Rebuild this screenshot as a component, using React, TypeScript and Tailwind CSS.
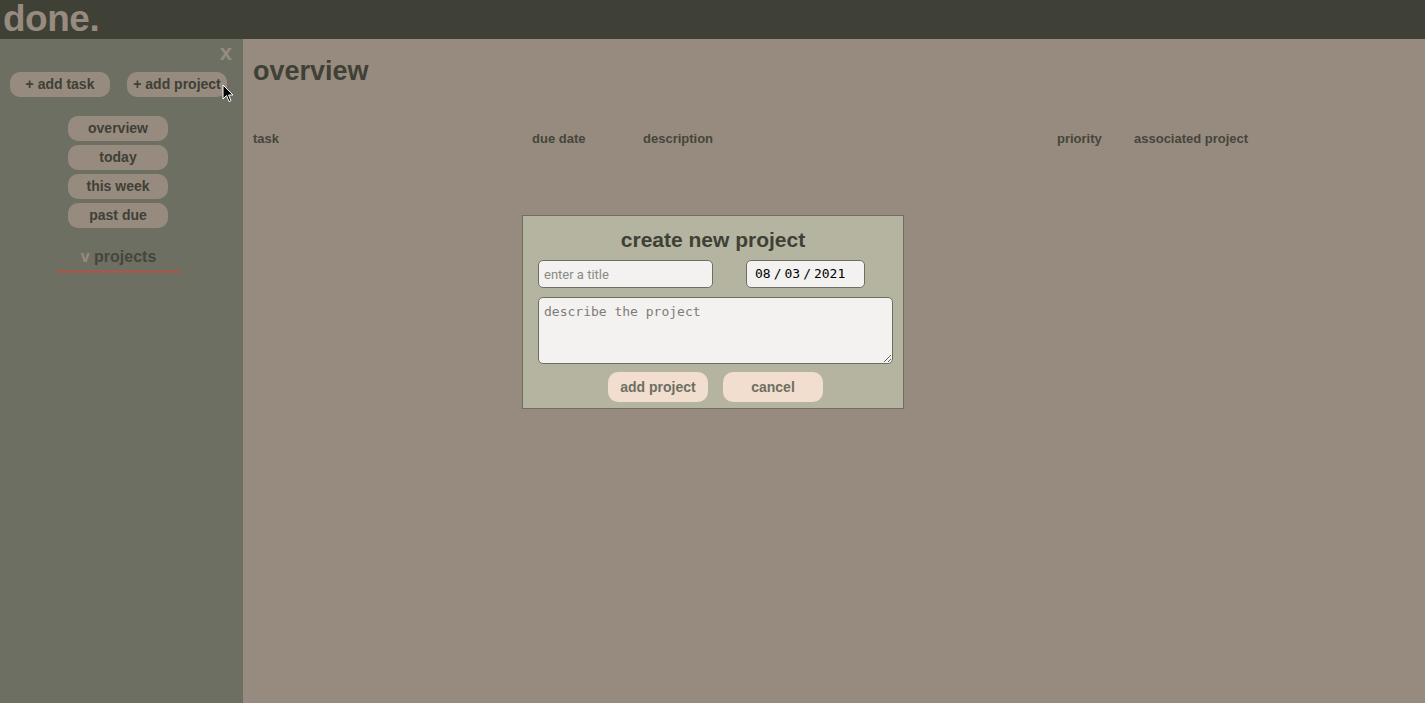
import React from 'react';

const navItems = ['overview', 'today', 'this week', 'past due'];

function Sidebar() {
  return (
    <aside className="w-[243px] shrink-0 bg-[#6e6f63] flex flex-col">
      <div className="flex justify-end pr-[11px] pt-[3px] h-[30px]">
        <span className="text-[22px] font-bold leading-none text-[#978b7f]">x</span>
      </div>
      <div className="flex gap-[17px] pl-[10px] mt-[3px]">
        <button className="w-[100px] h-[25px] rounded-[10px] bg-[#978b7f] text-[14px] font-bold text-[#3f4036]">
          + add task
        </button>
        <button className="w-[100px] h-[25px] rounded-[10px] bg-[#978b7f] text-[14px] font-bold text-[#3f4036]">
          + add project
        </button>
      </div>
      <nav className="flex flex-col items-center gap-[4px] mt-[19px] pr-[7px]">
        {navItems.map((item) => (
          <button
            key={item}
            className="w-[100px] h-[25px] rounded-[10px] bg-[#978b7f] text-[14px] font-bold text-[#3f4036]"
          >
            {item}
          </button>
        ))}
      </nav>
      <div className="flex flex-col items-center mt-[19px] pr-[6px]">
        <div className="text-[16px] font-bold leading-[20px]">
          <span className="text-[#978b7f]">v</span>{' '}
          <span className="text-[#45463b]">projects</span>
        </div>
        <div className="w-[125px] h-[3px] bg-[#9b5d50] mt-[3px]" />
      </div>
    </aside>
  );
}

function Modal() {
  return (
    <div className="absolute left-[279px] top-[176px] w-[382px] h-[194px] bg-[#b5b4a0] border border-[#6e6f63] flex flex-col pl-[15px]">
      <h2 className="self-center -ml-[15px] text-[21px] font-bold text-[#3f4036] mt-[12px] leading-[24px]">
        create new project
      </h2>
      <div className="flex gap-[33px] mt-[8px]">
        <input
          className="w-[175px] h-[28px] rounded-[5px] border border-[#6e6f63] bg-[#f3f2f0] px-[5px] text-[13px] outline-none placeholder:text-[#8a8a85] [font-family:Roboto,sans-serif]"
          placeholder="enter a title"
        />
        <div className="w-[119px] h-[28px] rounded-[5px] border border-[#6e6f63] bg-[#f3f2f0] flex items-center pl-[8px] text-[13px] text-black whitespace-nowrap [font-family:'DejaVu_Sans_Mono',monospace]">
          <span>08</span>
          <span className="mx-[3px]">/</span>
          <span>03</span>
          <span className="mx-[3px]">/</span>
          <span>2021</span>
        </div>
      </div>
      <textarea
        className="w-[355px] h-[67px] mt-[9px] rounded-[5px] border border-[#6e6f63] bg-[#f3f2f0] px-[5px] py-[4px] text-[13px] outline-none placeholder:text-[#7d7d78] [font-family:'DejaVu_Sans_Mono',monospace]"
        placeholder="describe the project"
      />
      <div className="flex gap-[15px] mt-[8px] ml-[70px]">
        <button className="w-[100px] h-[30px] rounded-[10px] bg-[#f2dece] text-[14px] font-bold text-[#6e6f63]">
          add project
        </button>
        <button className="w-[100px] h-[30px] rounded-[10px] bg-[#f2dece] text-[14px] font-bold text-[#6e6f63]">
          cancel
        </button>
      </div>
    </div>
  );
}

export default function App() {
  return (
    <div className="w-[1425px] h-[703px] flex flex-col overflow-hidden relative [font-family:'Liberation_Sans',Arial,sans-serif]">
      <header className="h-[39px] bg-[#3f4036] flex items-center pl-[3px]">
        <h1 className="text-[37px] font-bold leading-none text-[#978b7f] tracking-[-0.5px] -mt-[2px]">done.</h1>
      </header>
      <div className="flex flex-1">
        <Sidebar />
        <main className="flex-1 bg-[#978b7f] relative pl-[10px]">
          <h2 className="text-[27px] font-bold text-[#3f4036] mt-[17px] leading-[30px]">overview</h2>
          <div className="flex mt-[43px] text-[13px] font-bold text-[#45463b]">
            <span className="w-[279px]">task</span>
            <span className="w-[111px]">due date</span>
            <span className="w-[414px]">description</span>
            <span className="w-[77px]">priority</span>
            <span>associated project</span>
          </div>
          <Modal />
        </main>
      </div>
      <svg className="absolute left-[222px] top-[84px]" width="12" height="19" viewBox="0 0 12 19">
        <path d="M1 1 L1 15 L4.5 11.5 L7 17.5 L9 16.6 L6.6 11 L11 11 Z" fill="#000" stroke="#fff" strokeWidth="1" />
      </svg>
    </div>
  );
}
